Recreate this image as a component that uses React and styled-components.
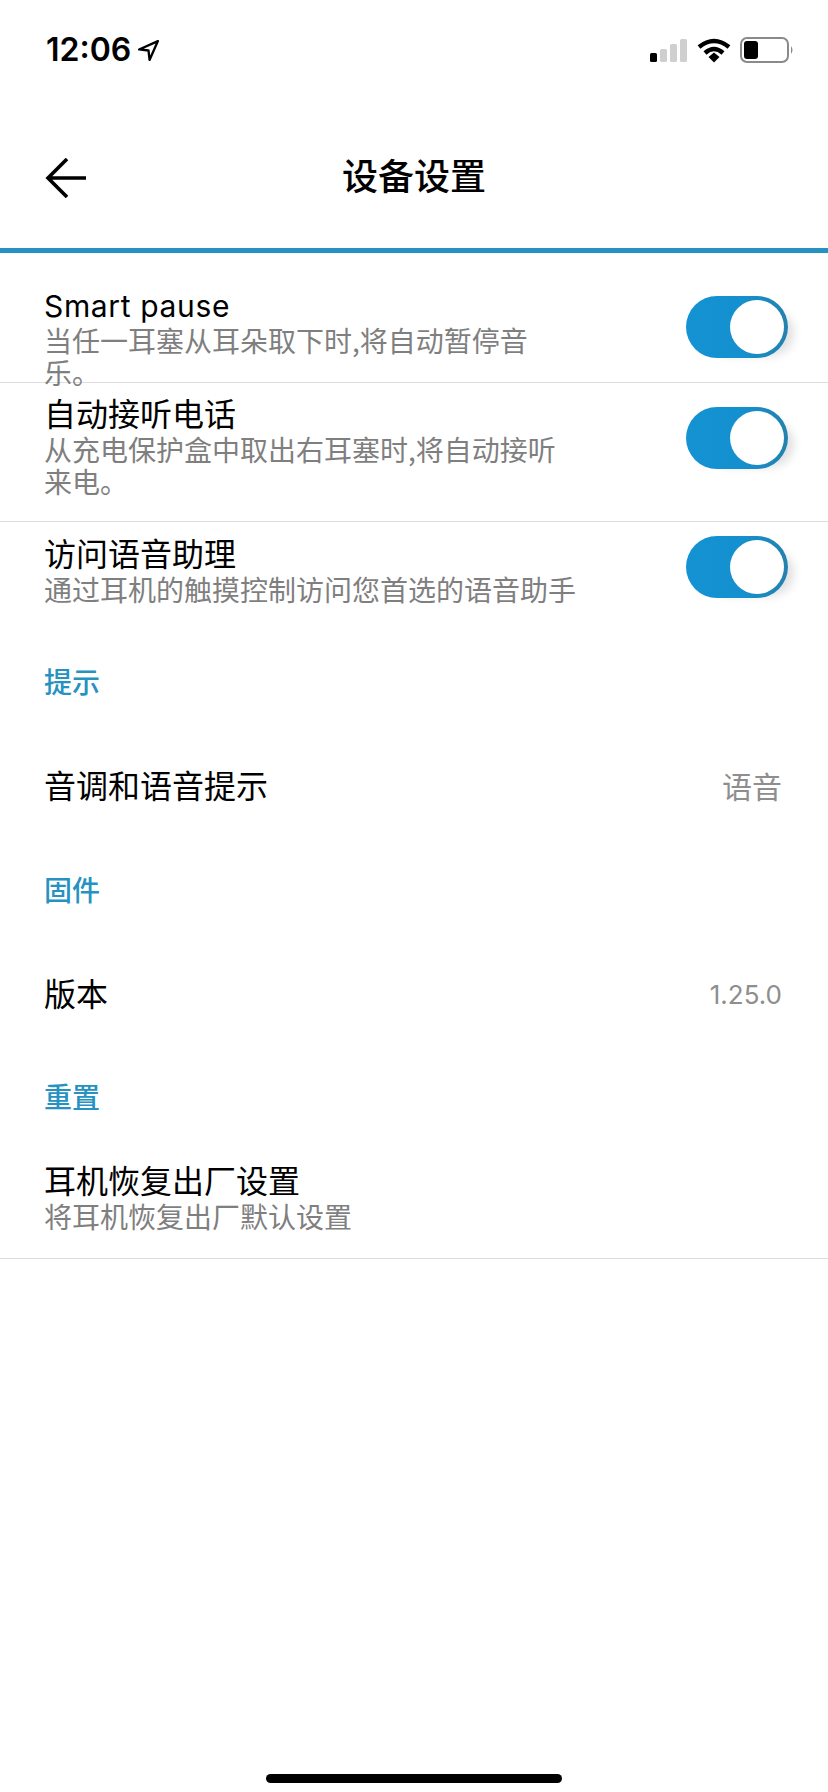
import React from "react";
import styled, { createGlobalStyle } from "styled-components";

const Global = createGlobalStyle`
  html, body { margin: 0; padding: 0; background: #fff; }
  body { font-family: "Inter", "Noto Sans CJK SC", sans-serif; }
`;
const Page = styled.div`
  width: 828px; height: 1792px; position: relative; overflow: hidden; background: #fff;
  display: flex; flex-direction: column;
`;
const StatusBar = styled.div`
  height: 100px; flex: none; box-sizing: border-box; padding: 28px 34px 0 46px;
  display: flex; justify-content: space-between; align-items: flex-start;
`;
const Time = styled.div`
  display: flex; align-items: center; gap: 6px;
  font: 600 32px/44px "Inter", sans-serif; color: #000; letter-spacing: 0;
`;
const StatusIcons = styled.div`
  display: flex; align-items: center; gap: 9px; height: 44px;
`;
const NavBar = styled.div`
  height: 148px; flex: none; box-sizing: border-box; padding: 8px 0 0 45px;
  display: flex; align-items: center; position: relative;
`;
const Title = styled.div`
  position: absolute; left: 0; right: 0; text-align: center; top: 49px;
  font: 500 36px/50px "Noto Sans CJK SC", sans-serif; color: #000;
`;
const AccentLine = styled.div`
  height: 5px; flex: none; background: #2592c2;
`;
const Row = styled.div`
  display: flex; align-items: ${p => p.$top ? "flex-start" : "center"}; justify-content: space-between;
  box-sizing: border-box; height: ${p => p.$h}px; padding: ${p => p.$pad || "0"} 46px 0 44px;
  border-bottom: ${p => p.$line ? "1px solid #dedede" : "none"};
  flex: none;
`;
const ToggledRow = styled(Row)`
  padding-right: 40px;
`;
const TextCol = styled.div`
  display: flex; flex-direction: column; width: 534px;
`;
const RowTitle = styled.div`
  font: 400 ${p => p.$latin ? 30 : 32}px/36px "Inter", "Noto Sans CJK SC", sans-serif; color: #000;
  letter-spacing: ${p => p.$latin ? "0.65px" : "0"};
`;
const RowSub = styled.div`
  font: 400 28px/32px "Noto Sans CJK SC", sans-serif; color: #7f7f7f;
`;
const SectionLabel = styled.div`
  flex: none; height: 74px; box-sizing: border-box; padding-left: 44px;
  display: flex; align-items: center;
  font: 500 28px/36px "Noto Sans CJK SC", sans-serif; color: #2592c2;
`;
const Value = styled.div`
  color: #8e8e8e;
  font: 400 ${p => p.$size}px/36px "Inter", "Noto Sans CJK SC", sans-serif;
`;
const Track = styled.div`
  width: 102px; height: 62px; border-radius: 31px; box-sizing: border-box; flex: none;
  background: linear-gradient(90deg, #1492d2 0%, #1490cf 55%, #2481ae 100%);
  position: relative; margin-top: ${p => p.$top}px; box-shadow: 14px 6px 10px -8px rgba(0,0,0,.12);
`;
const Knob = styled.div`
  position: absolute; right: 4px; top: 4px; width: 54px; height: 54px; border-radius: 50%; background: #fff;
`;
const HomeBar = styled.div`
  position: absolute; left: 266px; bottom: 9px; width: 296px; height: 9px; border-radius: 5px; background: #000;
`;

const Toggle = ({ top }) => <Track $top={top}><Knob /></Track>;

export default function App() {
  return (
    <Page>
      <Global />
      <StatusBar>
        <Time>
          12:06
          <svg width="23" height="23" viewBox="0 0 22 22"><path d="M20 2 L2 10 L11 11 L12 20 Z" fill="none" stroke="#000" strokeWidth="2.2" strokeLinejoin="round"/></svg>
        </Time>
        <StatusIcons>
          <svg width="38" height="24" viewBox="0 0 38 24">
            <rect x="0" y="15" width="7" height="9" rx="1.5" fill="#000"/>
            <rect x="10" y="11" width="7" height="13" rx="1.5" fill="#cfcfcf"/>
            <rect x="20" y="6" width="7" height="18" rx="1.5" fill="#cfcfcf"/>
            <rect x="30" y="1" width="7" height="23" rx="1.5" fill="#cfcfcf"/>
          </svg>
          <svg width="34" height="25" viewBox="0 0 34 25">
            <path d="M2 9 Q17 -3 32 9" fill="none" stroke="#000" strokeWidth="4.4"/>
            <path d="M8 15 Q17 7 26 15" fill="none" stroke="#000" strokeWidth="4.4"/>
            <path d="M11.5 19 L17 14.5 L22.5 19 L17 24.5 Z" fill="#000"/>
          </svg>
          <svg width="54" height="26" viewBox="0 0 54 26">
            <rect x="1" y="1" width="47" height="24" rx="6" fill="#fff" stroke="#8a8a8a" strokeWidth="2"/>
            <rect x="4" y="4" width="14" height="18" rx="3" fill="#000"/>
            <path d="M51 9 Q54 13 51 17 Z" fill="#8a8a8a"/>
          </svg>
        </StatusIcons>
      </StatusBar>
      <NavBar>
        <Title>设备设置</Title>
        <svg width="42" height="40" viewBox="0 0 42 40"><path d="M41 20 H3 M22 1 L3 20 L22 39" fill="none" stroke="#000" strokeWidth="3.6"/></svg>
      </NavBar>
      <AccentLine />
      <ToggledRow $h={130} $line $top $pad="35px">
        <TextCol>
          <RowTitle $latin>Smart pause</RowTitle>
          <RowSub>当任一耳塞从耳朵取下时,将自动暂停音乐。</RowSub>
        </TextCol>
        <Toggle top={8} />
      </ToggledRow>
      <ToggledRow $h={139} $line $top $pad="14px">
        <TextCol>
          <RowTitle>自动接听电话</RowTitle>
          <RowSub>从充电保护盒中取出右耳塞时,将自动接听来电。</RowSub>
        </TextCol>
        <Toggle top={10} />
      </ToggledRow>
      <ToggledRow $h={122} $top $pad="15px">
        <TextCol>
          <RowTitle>访问语音助理</RowTitle>
          <RowSub>通过耳机的触摸控制访问您首选的语音助手</RowSub>
        </TextCol>
        <Toggle top={-1} />
      </ToggledRow>
      <SectionLabel>提示</SectionLabel>
      <Row $h={134} $pad="4px">
        <RowTitle>音调和语音提示</RowTitle>
        <Value $size={30}>语音</Value>
      </Row>
      <SectionLabel>固件</SectionLabel>
      <Row $h={133} $pad="4px">
        <RowTitle>版本</RowTitle>
        <Value $size={26}>1.25.0</Value>
      </Row>
      <SectionLabel>重置</SectionLabel>
      <Row $h={126} $line $top $pad="31px">
        <TextCol>
          <RowTitle>耳机恢复出厂设置</RowTitle>
          <RowSub>将耳机恢复出厂默认设置</RowSub>
        </TextCol>
      </Row>
      <HomeBar />
    </Page>
  );
}
